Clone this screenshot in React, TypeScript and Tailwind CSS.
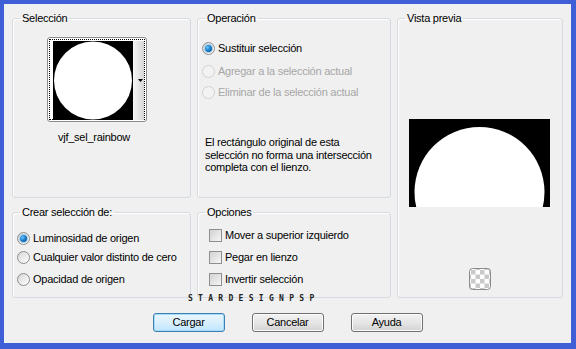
import React, { FC, ReactNode } from "react";

const Radio: FC<{ checked?: boolean; disabled?: boolean }> = ({ checked, disabled }) => (
  <span
    className={
      disabled
        ? "flex h-[13px] w-[13px] shrink-0 items-center justify-center rounded-full border border-[#d2d2d2] bg-[#f3f3f3]"
        : "flex h-[13px] w-[13px] shrink-0 items-center justify-center rounded-full border border-[#8e8e8e] bg-linear-to-br from-[#d6d6d6] to-white"
    }
  >
    {checked && (
      <span className="h-[7px] w-[7px] rounded-full bg-radial-[at_35%_35%] from-[#6cc4ff] via-[#1679c6] to-[#0a3f78] shadow-[0_0_0_1px_#9fcbea]" />
    )}
  </span>
);

const Check: FC = () => (
  <span className="h-[13px] w-[13px] shrink-0 border border-[#8e8f8f] bg-linear-to-br from-[#d2d2d2] to-[#f6f6f6]" />
);

const Group: FC<{ title: string; className?: string; children?: ReactNode }> = ({ title, className, children }) => (
  <fieldset className={`min-w-0 rounded-[3px] border border-[#d5dbe0] shadow-[inset_1px_1px_0_#fff] ${className ?? ""}`}>
    <legend className="ml-[7px] px-[2px] leading-[13px]">{title}</legend>
    {children}
  </fieldset>
);

const Btn: FC<{ label: string; primary?: boolean }> = ({ label, primary }) => (
  <button
    className={
      primary
        ? "h-[19px] w-[72px] rounded-[3px] border border-[#3c7fb1] bg-linear-to-b from-[#eaf6fd] via-[#d9effc] to-[#bee6fd] leading-none shadow-[inset_0_0_0_1px_#a6dcfa]"
        : "h-[19px] w-[72px] rounded-[3px] border border-[#707070] bg-linear-to-b from-[#f2f2f2] via-[#e6e6e6] to-[#d2d2d2] leading-none shadow-[inset_0_0_0_1px_#fcfcfc]"
    }
  >
    {label}
  </button>
);

const Row: FC<{ className?: string; children?: ReactNode }> = ({ className, children }) => (
  <div className={`flex h-[13px] items-center gap-[3px] leading-[13px] ${className ?? ""}`}>{children}</div>
);

export default function App() {
  return (
    <div className="h-[349px] w-[576px] bg-[#3f5fd6] pb-[6px] pl-[4px] pr-[5px] pt-[4px]">
      <div className="relative h-full bg-[#f0f0f0] px-[8px] pt-[8px] font-['Liberation_Sans',Arial,sans-serif] text-[11px] tracking-[-0.25px] text-black">
        <div className="grid grid-cols-[179px_194px_166px] grid-rows-[186px_92px] gap-x-[6px] gap-y-[8px]">
          <Group title="Selección">
            <div className="ml-[34px] mt-[12px] flex h-[85px] w-[100px] rounded-[3px] border border-[#8c8c8c] bg-white p-px">
              <div className="flex flex-1 border border-dotted border-black pl-[3px]">
                <svg width="80" height="79" viewBox="0 0 80 79" className="mt-px">
                  <rect width="80" height="79" fill="#000" />
                  <circle cx="40" cy="39.5" r="39" fill="#fff" />
                </svg>
                <div className="mt-px flex h-[79px] flex-1 items-center justify-end bg-linear-to-r from-[#f6f6f6] to-[#d6d6d6] pr-px">
                  <svg width="5" height="3" viewBox="0 0 5 3">
                    <path d="M0 0h5L2.5 3z" fill="#000" />
                  </svg>
                </div>
              </div>
            </div>
            <div className="ml-[31px] mt-[9px] w-[100px] text-center leading-[13px]">vjf_sel_rainbow</div>
          </Group>

          <Group title="Operación">
            <Row className="ml-[4px] mt-[17px]">
              <Radio checked />
              <span>Sustituir selección</span>
            </Row>
            <Row className="ml-[4px] mt-[10px] text-[#a7a7a7]">
              <Radio disabled />
              <span>Agregar a la selección actual</span>
            </Row>
            <Row className="ml-[4px] mt-[8px] text-[#a7a7a7]">
              <Radio disabled />
              <span>Eliminar de la selección actual</span>
            </Row>
            <p className="ml-[7px] mt-[37px] leading-[12.5px]">
              El rectángulo original de esta
              <br />
              selección no forma una intersección
              <br />
              completa con el lienzo.
            </p>
          </Group>

          <Group title="Vista previa" className="row-span-2">
            <svg width="141" height="88" viewBox="0 0 141 88" className="ml-[11px] mt-[94px]">
              <rect width="141" height="88" fill="#000" />
              <circle cx="70.5" cy="73" r="65" fill="#fff" />
            </svg>
            <svg width="22" height="22" viewBox="0 0 22 22" className="mx-auto mt-[61px]">
              <defs>
                <pattern id="chk" width="9" height="9" patternUnits="userSpaceOnUse" x="2" y="2">
                  <rect width="9" height="9" fill="#fff" />
                  <rect width="4.5" height="4.5" fill="#c9c9c9" />
                  <rect x="4.5" y="4.5" width="4.5" height="4.5" fill="#c9c9c9" />
                </pattern>
              </defs>
              <rect x="0.5" y="0.5" width="21" height="21" rx="3" fill="url(#chk)" stroke="#8a8a8a" />
            </svg>
          </Group>

          <Group title="Crear selección de:">
            <Row className="ml-[4px] mt-[13px]">
              <Radio checked />
              <span>Luminosidad de origen</span>
            </Row>
            <Row className="ml-[4px] mt-[6px]">
              <Radio />
              <span>Cualquier valor distinto de cero</span>
            </Row>
            <Row className="ml-[4px] mt-[9px]">
              <Radio />
              <span>Opacidad de origen</span>
            </Row>
          </Group>

          <Group title="Opciones">
            <Row className="ml-[11px] mt-[10px]">
              <Check />
              <span>Mover a superior izquierdo</span>
            </Row>
            <Row className="ml-[11px] mt-[9px]">
              <Check />
              <span>Pegar en lienzo</span>
            </Row>
            <Row className="ml-[11px] mt-[9px]">
              <Check />
              <span>Invertir selección</span>
            </Row>
          </Group>
        </div>

        <div className="mt-[15px] flex justify-center gap-[27px]">
          <Btn label="Cargar" primary />
          <Btn label="Cancelar" />
          <Btn label="Ayuda" />
        </div>

        <div className="absolute left-[184px] top-[290px] font-['DejaVu_Sans_Mono',monospace] text-[8px] font-bold uppercase leading-[10px] tracking-[5.3px] text-[#222]">
          stardesignpsp
        </div>
      </div>
    </div>
  );
}
